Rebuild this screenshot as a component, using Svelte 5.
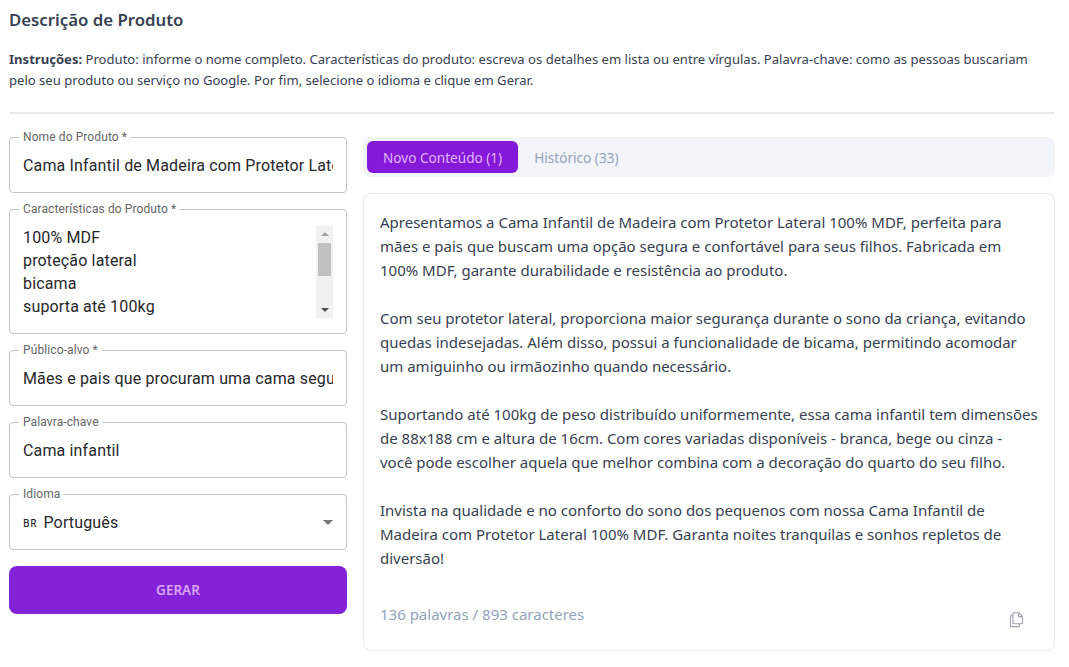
<script lang="ts">
  const paragraphs = [
    [
      "Apresentamos a Cama Infantil de Madeira com Protetor Lateral 100% MDF, perfeita para",
      "mães e pais que buscam uma opção segura e confortável para seus filhos. Fabricada em",
      "100% MDF, garante durabilidade e resistência ao produto."
    ],
    [
      "Com seu protetor lateral, proporciona maior segurança durante o sono da criança, evitando",
      "quedas indesejadas. Além disso, possui a funcionalidade de bicama, permitindo acomodar",
      "um amiguinho ou irmãozinho quando necessário."
    ],
    [
      "Suportando até 100kg de peso distribuído uniformemente, essa cama infantil tem dimensões",
      "de 88x188 cm e altura de 16cm. Com cores variadas disponíveis - branca, bege ou cinza -",
      "você pode escolher aquela que melhor combina com a decoração do quarto do seu filho."
    ],
    [
      "Invista na qualidade e no conforto do sono dos pequenos com nossa Cama Infantil de",
      "Madeira com Protetor Lateral 100% MDF. Garanta noites tranquilas e sonhos repletos de",
      "diversão!"
    ]
  ];
  let nome = "Cama Infantil de Madeira com Protetor Lateral 100% MDF";
  let caracteristicas = "100% MDF\nproteção lateral\nbicama\nsuporta até 100kg\n88x188 cm\naltura de 16cm";
  let publico = "Mães e pais que procuram uma cama segura e confortável";
  let palavra = "Cama infantil";
</script>

<div class="page">
  <h1>Descrição de Produto</h1>
  <p class="instrucoes">
    <strong>Instruções:</strong> Produto: informe o nome completo. Características do produto: escreva os detalhes em lista ou entre vírgulas. Palavra-chave: como as pessoas buscariam pelo seu produto ou serviço no Google. Por fim, selecione o idioma e clique em Gerar.
  </p>
  <hr />

  <div class="columns">
    <form class="form" onsubmit={(e) => e.preventDefault()}>
      <fieldset>
        <legend>Nome do Produto *</legend>
        <input bind:value={nome} />
      </fieldset>

      <fieldset class="area">
        <legend>Características do Produto *</legend>
        <div class="area-inner">
          <textarea bind:value={caracteristicas} rows="4"></textarea>
          <div class="scrollbar" aria-hidden="true">
            <span class="arrow up"></span>
            <div class="track"><span class="thumb"></span></div>
            <span class="arrow down"></span>
          </div>
        </div>
      </fieldset>

      <fieldset>
        <legend>Público-alvo *</legend>
        <input bind:value={publico} />
      </fieldset>

      <fieldset>
        <legend>Palavra-chave</legend>
        <input bind:value={palavra} />
      </fieldset>

      <fieldset>
        <legend>Idioma</legend>
        <div class="select">
          <span class="flag">BR</span>
          <span class="lang">Português</span>
          <span class="caret"></span>
        </div>
      </fieldset>

      <button class="gerar" type="submit">GERAR</button>
    </form>

    <section class="result">
      <div class="tabs">
        <button class="tab active">Novo Conteúdo (1)</button>
        <button class="tab">Histórico (33)</button>
      </div>

      <article class="card">
        <div class="text">
          {#each paragraphs as lines}
            <p>
              {#each lines as line}
                <span class="line">{line}</span>
              {/each}
            </p>
          {/each}
        </div>
        <div class="card-footer">
          <span class="count">136 palavras / 893 caracteres</span>
          <svg class="copy" viewBox="0 0 24 24" width="17" height="17" fill="none" stroke="currentColor" stroke-width="1.6" stroke-linejoin="round">
            <path d="M8 2.5h7.5l5 5V17a1 1 0 0 1-1 1H8a1 1 0 0 1-1-1V3.5a1 1 0 0 1 1-1z" />
            <path d="M15 2.5V8h5.5" />
            <path d="M7 6.5H4.5a1 1 0 0 0-1 1V21a1 1 0 0 0 1 1H15a1 1 0 0 0 1-1v-3" />
          </svg>
        </div>
      </article>
    </section>
  </div>
</div>

<style>
  :global(body) {
    background: #fff;
  }

  .page {
    box-sizing: border-box;
    width: 1069px;
    height: 667px;
    overflow: hidden;
    padding: 9px 14px 0 9px;
    font-family: "Noto Sans", "Open Sans", sans-serif;
    color: #334155;
  }

  h1 {
    margin: 0;
    font-size: 16.8px;
    line-height: 22px;
    font-weight: 600;
    color: #374151;
  }

  .instrucoes {
    margin: 18px 0 0;
    font-size: 13.08px;
    line-height: 21px;
    color: #374151;
  }

  hr {
    margin: 21px 0 0;
    border: none;
    height: 2px;
    background: #e5e7eb;
  }

  .columns {
    display: flex;
    gap: 16px;
    margin-top: 23px;
  }

  .form {
    width: 338px;
    flex: none;
    display: flex;
    flex-direction: column;
    gap: 16px;
  }

  fieldset {
    box-sizing: border-box;
    margin: -7px 0 0;
    padding: 0 13px;
    min-width: 0;
    height: 63px;
    border: 1px solid #c4c4c4;
    border-radius: 4px;
    font-family: Roboto, sans-serif;
  }

  legend {
    padding: 0 4px;
    margin-left: -4px;
    font-size: 12px;
    line-height: 14px;
    letter-spacing: 0.1px;
    color: #666;
  }

  input,
  textarea {
    display: block;
    box-sizing: border-box;
    width: 100%;
    margin: 0;
    padding: 0;
    border: none;
    outline: none;
    background: transparent;
    font-family: Roboto, sans-serif;
    font-size: 16px;
    letter-spacing: 0.15px;
    color: #27272a;
  }

  input {
    height: 20px;
    line-height: 20px;
    margin-top: 12px;
  }

  fieldset.area {
    height: 132px;
  }

  .area-inner {
    display: flex;
    height: 92px;
    margin-top: 10px;
  }

  textarea {
    flex: 1;
    min-width: 0;
    height: 92px;
    line-height: 23px;
    resize: none;
    overflow: hidden;
  }

  .scrollbar {
    flex: none;
    width: 17px;
    height: 92px;
    display: flex;
    flex-direction: column;
    align-items: center;
    background: #f1f1f1;
  }

  .arrow {
    flex: none;
    width: 0;
    height: 0;
    margin: 6px 0;
    border-left: 4px solid transparent;
    border-right: 4px solid transparent;
  }

  .arrow.up {
    border-bottom: 4px solid #a3a3a3;
  }

  .arrow.down {
    border-top: 4px solid #505050;
  }

  .track {
    flex: 1;
    width: 100%;
  }

  .thumb {
    display: block;
    width: 13px;
    height: 33px;
    margin: 1px 2px 0;
    background: #c1c1c1;
  }

  .select {
    display: flex;
    align-items: center;
    height: 20px;
    margin-top: 11px;
    font-size: 16px;
    letter-spacing: 0.15px;
    color: #27272a;
  }

  .flag {
    font-family: "Noto Sans", sans-serif;
    font-size: 10px;
    font-weight: 500;
    letter-spacing: 0.8px;
    margin-right: 6px;
    padding-top: 2px;
  }

  .lang {
    flex: 1;
  }

  .caret {
    width: 0;
    height: 0;
    border-left: 5px solid transparent;
    border-right: 5px solid transparent;
    border-top: 5px solid #757575;
  }

  .gerar {
    height: 48px;
    border: none;
    border-radius: 8px;
    background: #8422d8;
    color: #d8a6f5;
    font-family: "Noto Sans", sans-serif;
    font-size: 13.5px;
    font-weight: 600;
  }

  .result {
    flex: 1;
    min-width: 0;
    display: flex;
    flex-direction: column;
    gap: 16px;
  }

  .tabs {
    display: flex;
    height: 40px;
    box-sizing: border-box;
    padding: 4px;
    border-radius: 8px;
    background: #f1f5f9;
  }

  .tab {
    border: none;
    background: none;
    padding: 0 16px;
    border-radius: 6px;
    font-family: "Noto Sans", sans-serif;
    font-size: 13.6px;
    color: #94a3b8;
  }

  .tab.active {
    background: #8419d9;
    color: #e0b8fa;
  }

  .card {
    box-sizing: border-box;
    height: 458px;
    padding: 16px;
    border: 1px solid #e5e7eb;
    border-radius: 8px;
    display: flex;
    flex-direction: column;
  }

  .text {
    flex: 1;
    font-size: 15px;
    line-height: 24px;
    color: #374151;
  }

  .text p {
    margin: 0 0 24px;
  }

  .line {
    display: block;
    white-space: nowrap;
  }

  .card-footer {
    display: flex;
    align-items: center;
    justify-content: space-between;
    padding-right: 13px;
    margin-bottom: 6px;
    color: #94a3b8;
    font-size: 15px;
  }

  .copy {
    margin-top: 11px;
    color: #9ca3af;
  }
</style>
